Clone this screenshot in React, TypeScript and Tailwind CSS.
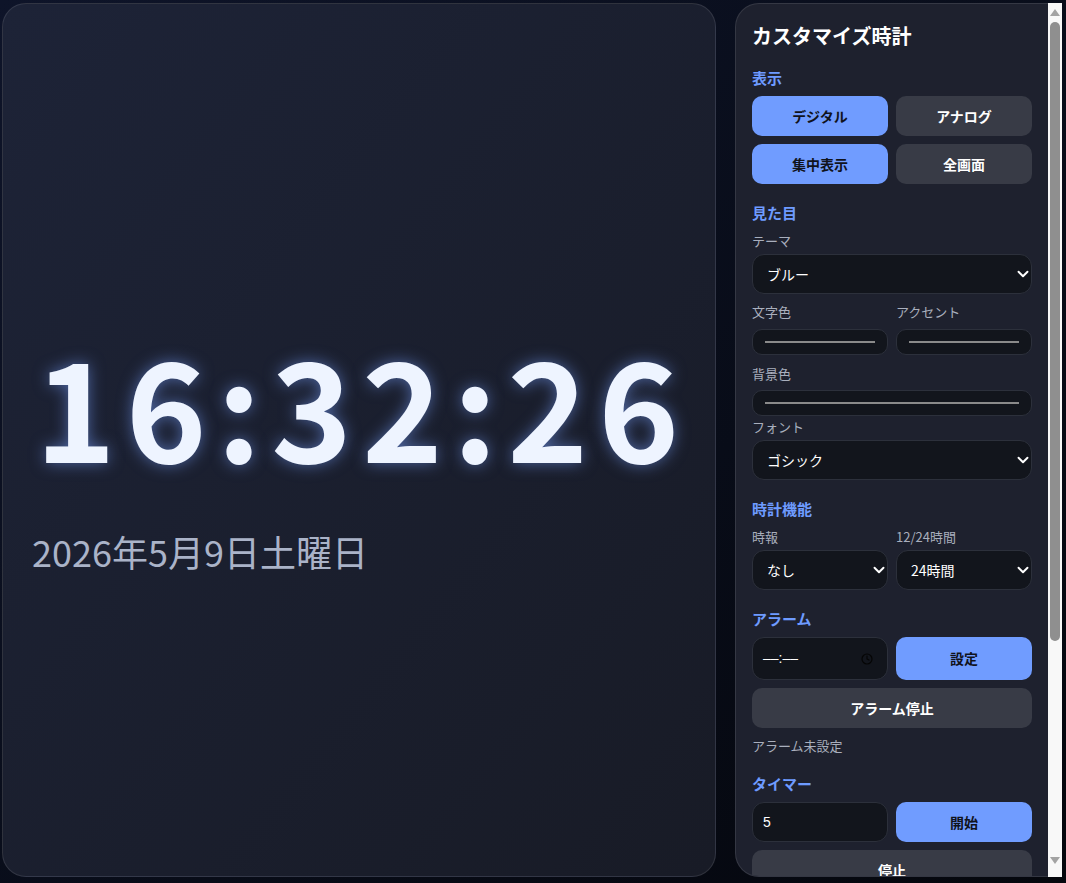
import { ChevronDown } from 'lucide-react'

const jp = { fontFamily: '"Noto Sans CJK JP", "Noto Sans", sans-serif' }

// Small gray caption above a control
const Label = ({ children, className = '' }: { children: React.ReactNode; className?: string }) => (
  <div className={`text-[13px] leading-[18px] text-[#a9afbd] ${className}`}>{children}</div>
)

// Blue section heading
const Heading = ({ children, className = '' }: { children: React.ReactNode; className?: string }) => (
  <div className={`text-[15px] leading-[20px] font-bold text-[#6e9bff] ${className}`}>{children}</div>
)

const Btn = ({ children, active = false, className = '' }: { children: React.ReactNode; active?: boolean; className?: string }) => (
  <button
    className={`h-10 rounded-[10px] text-[14px] font-bold ${
      active ? 'bg-[#709cff] text-[#10131c]' : 'bg-[#383b46] text-white'
    } ${className}`}
  >
    {children}
  </button>
)

const Select = ({ value, options, className = '' }: { value: string; options: string[]; className?: string }) => (
  <div className={`relative ${className}`}>
    <select
      defaultValue={value}
      className="h-10 w-full appearance-none rounded-[12px] border border-[#2c303b] bg-[#12151c] pl-[14px] pr-6 text-[14px] text-white outline-none"
    >
      {options.map(o => (
        <option key={o}>{o}</option>
      ))}
    </select>
    <ChevronDown size={18} strokeWidth={2.6} className="pointer-events-none absolute right-0 top-[11px] text-white" />
  </div>
)

// Color picker field, swatch shows as a thin gray rule
const ColorField = ({ className = '' }: { className?: string }) => (
  <div className={`flex h-[26px] items-center rounded-[10px] border border-[#2c303b] bg-[#12151c] px-3 ${className}`}>
    <div className="h-[2px] w-full bg-[#8a8a8a]" />
  </div>
)

// Classic scrollbar rail for the settings column
const ScrollRail = () => (
  <div className="flex w-[14px] shrink-0 flex-col items-center bg-[#f8f8f8] pb-[13px] pt-[6px]">
    <svg width="10" height="7" viewBox="0 0 10 7">
      <path d="M5 0 10 7H0z" fill="#a3a3a3" />
    </svg>
    <div className="mt-[6px] h-[619px] w-[10px] rounded-full bg-[#8f8f8f]" />
    <div className="flex-1" />
    <svg width="10" height="7" viewBox="0 0 10 7">
      <path d="M0 0h10L5 7z" fill="#a3a3a3" />
    </svg>
  </div>
)

export default function App() {
  return (
    <div
      className="flex h-screen w-full gap-[19px] overflow-hidden bg-gradient-to-br from-[#0e1429] to-[#05070d] pb-[6px] pl-[2px] pr-[4px] pt-[3px]"
      style={jp}
    >
      {/* clock face */}
      <div className="flex min-w-0 flex-1 flex-col justify-center overflow-hidden rounded-[24px] border border-white/10 bg-gradient-to-br from-[#1d2337] to-[#181b26] px-8 pt-[28px]">
        <div className="whitespace-nowrap text-[137px] font-bold leading-none tracking-[10px] text-[#eef4ff] [text-shadow:0_0_16px_rgba(120,160,255,0.55)]">
          16:32:26
        </div>
        <div className="-ml-[3px] mt-[57px] whitespace-nowrap text-[36px] leading-[44px] text-[#aab3c8]">2026年5月9日土曜日</div>
      </div>

      {/* settings */}
      <div className="flex w-[327px] shrink-0">
        <div className="flex-1 overflow-hidden rounded-l-[24px] border border-r-0 border-white/10 bg-[#1e212e] px-4 pb-4 pt-[18px]">
          <div className="text-[20px] font-bold leading-[28px] text-white">カスタマイズ時計</div>

          <Heading className="mt-[18px]">表示</Heading>
          <div className="mt-2 grid grid-cols-2 gap-2">
            <Btn active>デジタル</Btn>
            <Btn>アナログ</Btn>
            <Btn active>集中表示</Btn>
            <Btn>全画面</Btn>
          </div>

          <Heading className="mt-[19px]">見た目</Heading>
          <Label className="mt-[9px]">テーマ</Label>
          <Select className="mt-1" value="ブルー" options={['ブルー', 'グリーン', 'パープル', 'モノクロ']} />

          <div className="mt-[9px] grid grid-cols-2 gap-2">
            <div>
              <Label>文字色</Label>
              <ColorField className="mt-2" />
            </div>
            <div>
              <Label>アクセント</Label>
              <ColorField className="mt-2" />
            </div>
          </div>

          <Label className="mt-[10px]">背景色</Label>
          <ColorField className="mt-[7px]" />

          <Label className="mt-[2px]">フォント</Label>
          <Select className="mt-1" value="ゴシック" options={['ゴシック', '明朝', '等幅']} />

          <Heading className="mt-[19px]">時計機能</Heading>
          <div className="mt-[9px] grid grid-cols-2 gap-2">
            <div>
              <Label>時報</Label>
              <Select className="mt-1" value="なし" options={['なし', '毎時', '30分ごと']} />
            </div>
            <div>
              <Label>12/24時間</Label>
              <Select className="mt-1" value="24時間" options={['24時間', '12時間']} />
            </div>
          </div>

          <Heading className="mt-[19px]">アラーム</Heading>
          <div className="mt-2 grid grid-cols-2 gap-2">
            <div className="flex h-[43px] items-center justify-between rounded-[12px] border border-[#2c303b] bg-[#12151c] pl-[10px] pr-[14px]">
              <span className="text-[14px] text-white" style={{ fontFamily: '"Liberation Sans", sans-serif' }}>
                ––:––
              </span>
              <svg width="12" height="12" viewBox="0 0 24 24" fill="none" stroke="#050505" strokeWidth="2.4" strokeLinecap="round">
                <circle cx="12" cy="12" r="10" />
                <path d="M12 6v6l4 2" />
              </svg>
            </div>
            <Btn active className="h-[43px]">設定</Btn>
          </div>
          <Btn className="mt-2 w-full">アラーム停止</Btn>
          <Label className="mt-[9px]">アラーム未設定</Label>

          <Heading className="mt-[19px]">タイマー</Heading>
          <div className="mt-2 grid grid-cols-2 gap-2">
            <input
              defaultValue="5"
              className="h-10 rounded-[12px] border border-[#2c303b] bg-[#12151c] pl-[10px] text-[14px] text-white outline-none"
              style={{ fontFamily: '"Liberation Sans", sans-serif' }}
            />
            <Btn active>開始</Btn>
          </div>
          <Btn className="mt-2 w-full">停止</Btn>
          <Label className="mt-[9px]">タイマー未設定</Label>
        </div>
        <ScrollRail />
      </div>
    </div>
  )
}
